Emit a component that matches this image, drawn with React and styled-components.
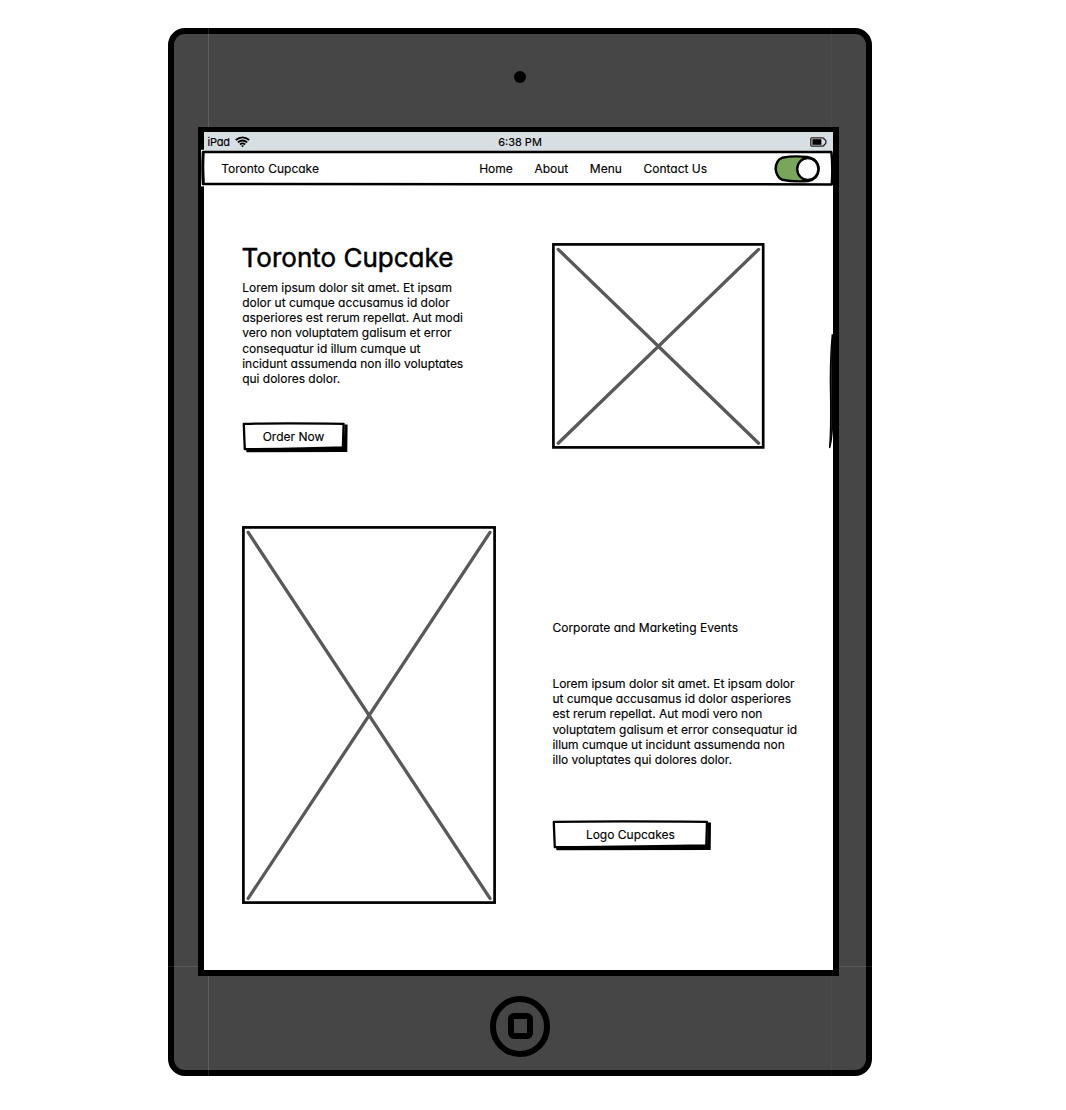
import React from 'react';
import styled, { createGlobalStyle } from 'styled-components';

const GlobalStyle = createGlobalStyle`
  *, *::before, *::after { box-sizing: border-box; }
  body {
    margin: 0;
    background: #fff;
    color: #000;
    font-family: Inter, "Noto Sans", sans-serif;
    font-feature-settings: 'cv11';
    font-size: 12px;
    -webkit-text-stroke: 0.15px currentColor;
  }
  svg { display: block; }
`;

const Page = styled.div`
  height: 1110px;
  padding: 28px 0 0 168px;
  overflow: hidden;
`;

const Tablet = styled.div`
  position: relative;
  display: flex;
  flex-direction: column;
  align-items: center;
  width: 704.4px;
  height: 1048px;
  border: 6px solid #000;
  border-radius: 17px;
  background: #464646;
`;

const Seam = styled.div`
  position: absolute;
  background: rgba(255, 255, 255, ${(p) => p.$alpha});
  left: ${(p) => p.$x}px;
  top: ${(p) => p.$y}px;
  width: ${(p) => p.$w || 1}px;
  height: ${(p) => p.$h || 1}px;
`;

const TopBezel = styled.div`
  height: 93px;
  padding-top: 36.9px;
`;

const Camera = styled.div`
  width: 12.6px;
  height: 12.6px;
  border-radius: 50%;
  background: #000;
`;

const Screen = styled.div`
  position: relative;
  display: flex;
  flex-direction: column;
  flex: none;
  width: 641px;
  height: 849px;
  margin-right: 3.4px;
  border: 6px solid #000;
  border-top-width: 5px;
  background: #fff;
`;

const StatusBar = styled.div`
  display: grid;
  grid-template-columns: 1fr auto 1fr;
  align-items: center;
  height: 19px;
  padding: 1px 6.2px 0 3.5px;
  background: #d7dfe2;
  font-size: 11px;
`;

const Carrier = styled.div`
  display: flex;
  align-items: center;
  gap: 5px;
  letter-spacing: -0.2px;
`;

const Clock = styled.span`
  padding-left: 5.7px;
`;

const BatterySlot = styled.div`
  display: flex;
  justify-content: flex-end;
`;

const NavBar = styled.nav`
  position: relative;
  display: flex;
  align-items: center;
  height: 35px;
  padding: 0 13.2px 0 17.2px;
  line-height: 16px;
`;

const NavFrame = styled.svg`
  position: absolute;
  left: -4px;
  top: -1.6px;
`;

const Brand = styled.span`
  position: relative;
  width: 258px;
`;

const NavLinks = styled.div`
  position: relative;
  display: flex;
  flex: 1;
  gap: 21.6px;
`;

const NavLink = styled.span`
  color: #000;
`;

const Toggle = styled.svg`
  position: relative;
`;

const Main = styled.main`
  display: flex;
  flex-direction: column;
  gap: 73px;
  padding: 54.5px 0 0 38.2px;
`;

const Section = styled.section`
  display: grid;
  grid-template-columns: 310.2px 1fr;
  align-items: start;
`;

const Column = styled.div`
  display: flex;
  flex-direction: column;
  align-items: flex-start;
  padding-top: ${(p) => p.$top || 0}px;
`;

const Title = styled.h1`
  margin: 1.5px 0 5.7px -0.6px;
  font-size: 26px;
  font-weight: 400;
  line-height: 32px;
  -webkit-text-stroke-width: 0.5px;
`;

const Subtitle = styled.h2`
  margin: 0 0 40.4px;
  font-size: 12px;
  font-weight: 400;
  line-height: 16px;
  letter-spacing: 0.02px;
`;

const Copy = styled.p`
  margin: 0 0 ${(p) => p.$after}px;
  line-height: 15.2px;
  letter-spacing: -0.02px;
  white-space: pre;
`;

const ButtonBox = styled.button`
  position: relative;
  width: ${(p) => p.$width}px;
  height: 31px;
  padding: 0.6px 3px 0 0;
  border: 0;
  background: none;
  color: #000;
  font: inherit;
  line-height: 16px;
`;

const ButtonSketch = styled.svg`
  position: absolute;
  left: 0;
  top: 0;
`;

const Label = styled.span`
  position: relative;
`;

const ScrollMark = styled.svg`
  position: absolute;
  right: -1px;
  top: 202px;
`;

const HomeButton = styled.div`
  display: flex;
  align-items: center;
  justify-content: center;
  width: 60.5px;
  height: 60.5px;
  margin-top: 20px;
  border: 6px solid #000;
  border-radius: 50%;
`;

const HomeGlyph = styled.div`
  width: 25px;
  height: 26px;
  border: 6px solid #000;
  border-radius: 6px;
`;

function Placeholder({ width, height }) {
  return (
    <svg width={width} height={height} viewBox={`0 0 ${width} ${height}`}>
      <rect x="1.4" y="1.4" width={width - 2.8} height={height - 2.8} fill="#fff" stroke="#000" strokeWidth="2.7" />
      <path
        d={`M6.2 6.4 L${width - 6} ${height - 5.6} M${width - 6} 6.4 L6.2 ${height - 5.6}`}
        stroke="#595959"
        strokeWidth="3.3"
        strokeLinecap="round"
      />
    </svg>
  );
}

function SketchButton({ width, children }) {
  const r = width - 3;
  return (
    <ButtonBox $width={width}>
      <ButtonSketch width={width} height="31" viewBox={`0 0 ${width} 31`}>
        <path d={`M4 27 L${r - 1} 25 L${r} 2.5 H${width} L${width - 0.3} 30 L4.5 30.2 Z`} fill="#000" />
        <path
          d={`M1.8 1.9 Q${width * 0.35} 0.8 ${r - 1} 1.8 L${r - 1.7} 25.3 Q${width * 0.6} 26.4 2.8 27.2 Q2.2 14 1.8 1.9 Z`}
          fill="#fff"
          stroke="#000"
          strokeWidth="2.3"
          strokeLinejoin="round"
        />
      </ButtonSketch>
      <Label>{children}</Label>
    </ButtonBox>
  );
}

function WifiIcon() {
  return (
    <svg width="15" height="11.5" viewBox="0 0 16 12" fill="none" stroke="#000" strokeWidth="1.9">
      <path d="M0.8 4.2 Q8 -1.7 15.2 4.2" />
      <path d="M3 6.7 Q8 2.6 13 6.7" />
      <path d="M5.2 8.9 Q8 6.6 10.8 8.9" />
      <path d="M6.4 10.2 Q8 9 9.6 10.2 L8 11.8 Z" fill="#000" stroke="none" />
    </svg>
  );
}

function BatteryIcon() {
  return (
    <svg width="17" height="10" viewBox="0 0 17 10">
      <path
        d="M1.6 0.9 H12.8 Q14 0.9 14.2 2.2 Q16 3 16 5 Q16 7 14.2 7.8 Q14 9.1 12.8 9.1 H1.6 Q0.8 9.1 0.8 8.3 V1.7 Q0.8 0.9 1.6 0.9 Z"
        fill="none"
        stroke="#222"
        strokeWidth="1.3"
      />
      <rect x="2.4" y="2.2" width="9" height="5.6" fill="#000" />
    </svg>
  );
}

const heroCopy = `Lorem ipsum dolor sit amet. Et ipsam
dolor ut cumque accusamus id dolor
asperiores est rerum repellat. Aut modi
vero non voluptatem galisum et error
consequatur id illum cumque ut
incidunt assumenda non illo voluptates
qui dolores dolor.`;

const eventsCopy = `Lorem ipsum dolor sit amet. Et ipsam dolor
ut cumque accusamus id dolor asperiores
est rerum repellat. Aut modi vero non
voluptatem galisum et error consequatur id
illum cumque ut incidunt assumenda non
illo voluptates qui dolores dolor.`;

export default function App() {
  return (
    <Page>
      <GlobalStyle />
      <Tablet>
        <Seam $x={34} $y={-6} $h={99} $alpha={0.13} />
        <Seam $x={34} $y={942} $h={100} $alpha={0.13} />
        <Seam $x={657} $y={-6} $h={99} $alpha={0.03} />
        <Seam $x={657} $y={942} $h={100} $alpha={0.03} />
        <Seam $x={-6} $y={932} $w={30} $alpha={0.1} />
        <Seam $x={665} $y={932} $w={33} $alpha={0.1} />
        <TopBezel>
          <Camera />
        </TopBezel>
        <Screen>
          <StatusBar>
            <Carrier>
              iPad
              <WifiIcon />
            </Carrier>
            <Clock>6:38 PM</Clock>
            <BatterySlot>
              <BatteryIcon />
            </BatterySlot>
          </StatusBar>
          <NavBar>
            <NavFrame width="634" height="38" viewBox="0 0 634 38">
              <path d="M1 0.8 H5 V37.4 H1 Z" fill="#fff" />
              <path
                d="M3 3 Q230 2 631.4 3 Q633 18 631.8 35.4 Q330 36.2 3 35 Q2 18 3 3 Z"
                fill="#fff"
                stroke="#000"
                strokeWidth="2.5"
                strokeLinejoin="round"
              />
              <path d="M4 4 Q3.2 18 4.2 34" fill="none" stroke="#000" strokeWidth="1.2" />
            </NavFrame>
            <Brand>Toronto Cupcake</Brand>
            <NavLinks>
              <NavLink>Home</NavLink>
              <NavLink>About</NavLink>
              <NavLink>Menu</NavLink>
              <NavLink>Contact Us</NavLink>
            </NavLinks>
            <Toggle width="46" height="28" viewBox="0 0 46 28">
              <path
                d="M8 2.8 Q20 0.4 33 2 Q44.4 4 44.6 14 Q44.4 24 34 26 Q20 27.2 8 24.8 Q2.6 22 1.6 14 Q2 5 8 2.8 Z"
                fill="#79a65a"
                stroke="#000"
                strokeWidth="2.4"
              />
              <ellipse cx="33.8" cy="14" rx="10.6" ry="11" fill="#fff" stroke="#000" strokeWidth="2.4" />
            </Toggle>
          </NavBar>
          <Main>
            <Section>
              <Column>
                <Title>Toronto Cupcake</Title>
                <Copy $after={35.4}>{heroCopy}</Copy>
                <SketchButton width={105.6}>Order Now</SketchButton>
              </Column>
              <Column $top={2.6}>
                <Placeholder width={212.6} height={205.8} />
              </Column>
            </Section>
            <Section>
              <Placeholder width={254} height={378} />
              <Column $top={94}>
                <Subtitle>Corporate and Marketing Events</Subtitle>
                <Copy $after={52.4}>{eventsCopy}</Copy>
                <SketchButton width={159}>Logo Cupcakes</SketchButton>
              </Column>
            </Section>
          </Main>
          <ScrollMark width="6" height="116" viewBox="0 0 6 116">
            <path d="M4.2 1 Q1.6 28 2.6 66 Q3 96 1.6 114 Q3.6 108 4.6 92 V1 Z" fill="#222" stroke="#000" strokeWidth="1.3" />
          </ScrollMark>
        </Screen>
        <HomeButton>
          <HomeGlyph />
        </HomeButton>
      </Tablet>
    </Page>
  );
}
